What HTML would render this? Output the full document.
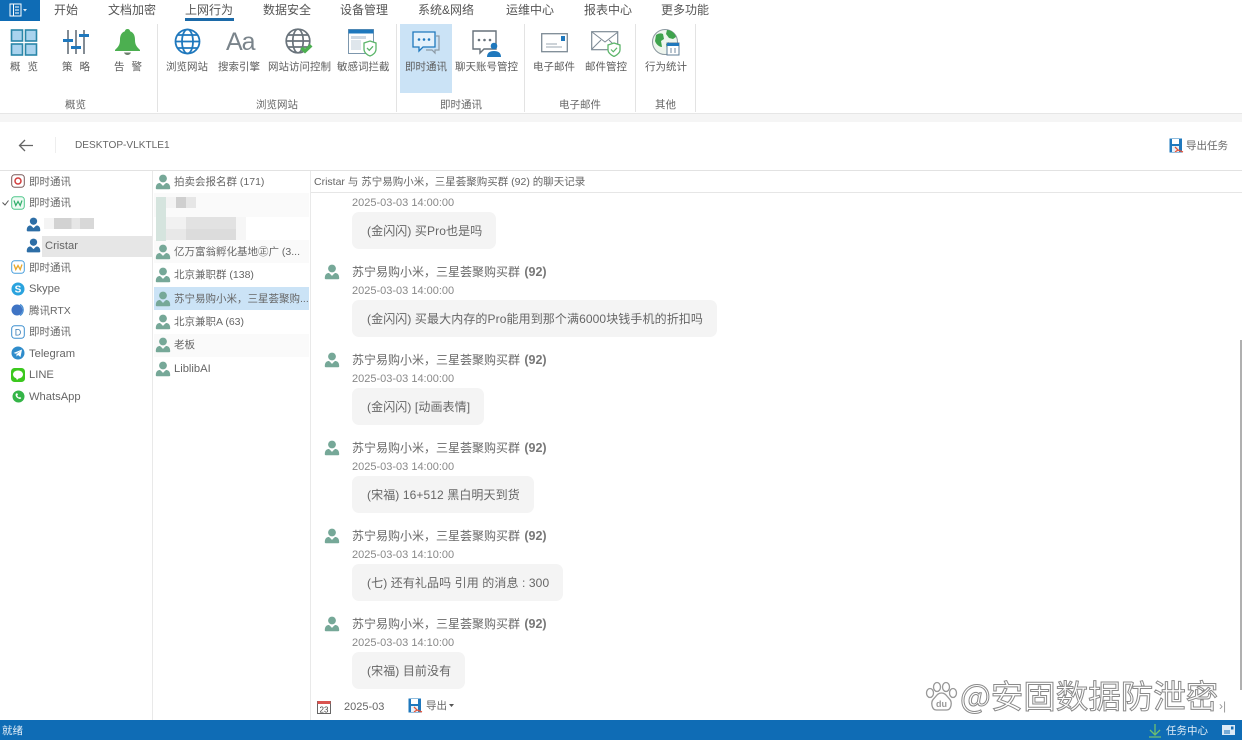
<!DOCTYPE html>
<html lang="zh"><head><meta charset="utf-8"><style>
html,body{margin:0;padding:0;background:#fff}
#p{position:relative;width:1242px;height:740px;overflow:hidden;background:#fff;font-family:"Liberation Sans","Noto Sans CJK SC",sans-serif;font-size:12px;color:#666}
#p div,#p span.a,#p svg.a{position:absolute}
.t{white-space:nowrap;line-height:16px}
.tab{top:2px;font-size:12px;color:#555}
.rl{top:59px;font-size:10.5px;color:#5c5c5c;text-align:center;white-space:nowrap;line-height:16px}
.wd{word-spacing:4px}
.gl{top:97px;font-size:10.5px;color:#666;text-align:center;white-space:nowrap;line-height:16px}
.sep{top:24px;width:1px;height:88px;background:#e3e3e3}
.tr{left:29px;font-size:10.5px;color:#666;white-space:nowrap;line-height:16px;margin-top:1px}
.li{left:174px;font-size:10.5px;color:#666;white-space:nowrap;line-height:16px;margin-top:1px}
.la{font-size:11.2px}
.ti{left:352px;font-size:12px;color:#6a6a6a;white-space:nowrap;line-height:16px;margin-top:1px}
.ti b{font-weight:bold;color:#777;font-size:12.5px;margin-left:1px}
.tm{left:352px;font-size:11px;color:#888;white-space:nowrap;line-height:14px;margin-top:1px}
.bu{left:352px;height:37px;background:#f4f4f4;border-radius:7px;font-size:12px;letter-spacing:.1px;color:#666;white-space:nowrap;line-height:39px;padding:0 14px 0 15px}
</style></head><body><div id="p">
<svg width="0" height="0" style="position:absolute"><defs>
<symbol id="u" viewBox="0 0 16 16"><circle cx="8" cy="4.500" r="3.900"/><path d="M.8 14.300c0-3 .9-4.500 3.100-5.200 1.200-.4 1.900.5 4.100 2.800 2.200-2.300 2.900-3.200 4.100-2.800 2.200.7 3.100 2.200 3.100 5.200 0 .6-.4 1-1 1H1.800c-.6 0-1-.4-1-1z"/></symbol>
</defs></svg>

<!-- top tabs -->
<div style="left:0;top:0;width:40px;height:21px;background:#0f6cb5"></div>
<svg class="a" style="left:9px;top:3px" width="20" height="14" viewBox="0 0 20 14"><rect x="1" y="1" width="11" height="12" fill="none" stroke="#fff"/><path d="M4.500 1v12M6 4h4M6 7h4M6 10h4" stroke="#fff" fill="none"/><path d="M14 6l2 2.500L18 6z" fill="#dbe9f5"/></svg>
<div class="t tab" style="left:54px">开始</div>
<div class="t tab" style="left:108px">文档加密</div>
<div class="t tab" style="left:185px">上网行为</div>
<div style="left:185px;top:18px;width:49px;height:3px;background:#1c6aa8"></div>
<div class="t tab" style="left:263px">数据安全</div>
<div class="t tab" style="left:340px">设备管理</div>
<div class="t tab" style="left:418px">系统&amp;网络</div>
<div class="t tab" style="left:506px">运维中心</div>
<div class="t tab" style="left:584px">报表中心</div>
<div class="t tab" style="left:661px">更多功能</div>

<!-- ribbon -->
<div style="left:400px;top:24px;width:52px;height:69px;background:#cbe3f6"></div>
<div class="sep" style="left:157px"></div><div class="sep" style="left:396px"></div><div class="sep" style="left:524px"></div><div class="sep" style="left:635px"></div><div class="sep" style="left:695px"></div>
<div style="left:0;top:113px;width:1242px;height:9px;background:#f5f5f5;border-top:1px solid #e6e6e6;box-sizing:border-box"></div>

<svg class="a" style="left:10px;top:28px" width="28" height="28" viewBox="0 0 28 28"><g fill="#a9d3ee" stroke="#2a86a8" stroke-width="1.600"><rect x="1.500" y="2" width="11" height="11"/><rect x="15.500" y="2" width="11" height="11"/><rect x="1.500" y="16" width="11" height="11"/><rect x="15.500" y="16" width="11" height="11"/></g></svg>
<svg class="a" style="left:62px;top:28px" width="28" height="28" viewBox="0 0 28 28"><path d="M6 2v24M14 2v24M22 2v24" stroke="#5c6770" stroke-width="1.500"/><path d="M1 11h10v3H1zM9 18h10v3H9zM17 6h10v3H17z" fill="#1f78bd"/></svg>
<svg class="a" style="left:114px;top:28px" width="27" height="27" viewBox="0 0 27 27"><path d="M13.500 1c1.500 0 2.500 1 2.600 2.300C20 4.800 21 8 21 12c0 5 2 7 5 10v1H1v-1c3-3 5-5 5-10 0-4 1-7.200 4.900-8.700C11 2 12 1 13.500 1z" fill="#4caf50"/><path d="M10 24.500h7c-.6 1.700-2 2.500-3.500 2.500S10.600 26.200 10 24.500z" fill="#6d7f6d"/></svg>
<svg class="a" style="left:174px;top:28px" width="27" height="27" viewBox="0 0 27 27" fill="none" stroke="#1f78bd" stroke-width="1.800"><circle cx="13.500" cy="13.500" r="12"/><ellipse cx="13.500" cy="13.500" rx="5.500" ry="12"/><path d="M1.500 13.500h24M3.500 7h20M3.500 20h20"/></svg>
<div class="t" style="left:226px;top:26px;font-size:25px;line-height:32px;color:#7a848b;letter-spacing:-1px">Aa</div>
<svg class="a" style="left:285px;top:28px" width="28" height="28" viewBox="0 0 28 28"><g fill="none" stroke="#69737b" stroke-width="1.700"><circle cx="13" cy="13" r="11.800"/><ellipse cx="13" cy="13" rx="5.200" ry="11.800"/><path d="M1.200 13h23.600M3 7h20M3 19h20"/></g><path d="M15 21l3-2.500 2 2 5-4.500 2.500 2.500L20 25.500z" fill="#4caf50"/></svg>
<svg class="a" style="left:348px;top:29px" width="29" height="28" viewBox="0 0 29 28"><rect x=".5" y=".5" width="25" height="24" fill="#fff" stroke="#7d97ad"/><rect x=".5" y=".5" width="25" height="4" fill="#1f78bd"/><rect x="3" y="7" width="15" height="3" fill="#cfd9e3"/><rect x="3" y="11" width="10" height="10" fill="#dfe6ec"/><path d="M22 12l6 2v6c0 3.500-3 6-6 7-3-1-6-3.500-6-7v-6z" fill="#fff" stroke="#5cb56a" stroke-width="1.300"/><path d="M19 19l2.300 2.300 3.700-4" fill="none" stroke="#5cb56a" stroke-width="1.300"/></svg>
<svg class="a" style="left:412px;top:31px" width="28" height="24" viewBox="0 0 28 24"><path d="M24 5h3v14h-4v3l-3-3h-6" fill="none" stroke="#8d9aa5" stroke-width="1.200"/><path d="M1 1h22v15H11l-4 4v-4H1z" fill="#e4f1fb" stroke="#1f78bd" stroke-width="1.300"/><circle cx="7" cy="8.500" r="1.300" fill="#1f78bd"/><circle cx="12" cy="8.500" r="1.300" fill="#1f78bd"/><circle cx="17" cy="8.500" r="1.300" fill="#1f78bd"/></svg>
<svg class="a" style="left:472px;top:30px" width="29" height="27" viewBox="0 0 29 27"><path d="M1 1h23v18H12l-4 4v-4H1z" fill="#fff" stroke="#67717a" stroke-width="1.400"/><circle cx="7" cy="10" r="1.300" fill="#67717a"/><circle cx="12.500" cy="10" r="1.300" fill="#67717a"/><circle cx="18" cy="10" r="1.300" fill="#67717a"/><circle cx="22" cy="16" r="3.300" fill="#1f78bd"/><path d="M15 27c0-4 2.500-6 7-6s7 2 7 6z" fill="#1f78bd"/></svg>
<svg class="a" style="left:541px;top:33px" width="27" height="20" viewBox="0 0 27 20"><rect x=".7" y=".7" width="25.600" height="18" fill="#fff" stroke="#7d8a95" stroke-width="1.300"/><rect x="20" y="3" width="4" height="5" fill="#1f78bd"/><path d="M5 11h11M5 14h16" stroke="#9ba7b1"/></svg>
<svg class="a" style="left:591px;top:31px" width="30" height="26" viewBox="0 0 30 26"><rect x=".7" y=".7" width="26" height="18" fill="#fff" stroke="#7d8a95" stroke-width="1.200"/><path d="M1 1l13 10L27 1M1 18l9-9M27 18l-9-9" fill="none" stroke="#7d8a95"/><path d="M23 12l6 2v5c0 3-3 5-6 6.500-3-1.500-6-3.500-6-6.500v-5z" fill="#fff" stroke="#5cb56a" stroke-width="1.300"/><path d="M20 18.500l2.300 2.300 3.700-4" fill="none" stroke="#5cb56a" stroke-width="1.200"/></svg>
<svg class="a" style="left:651px;top:28px" width="30" height="29" viewBox="0 0 30 29"><circle cx="14" cy="14" r="12.500" fill="#eef5ee" stroke="#8a979f"/><path d="M5 7c3-2 5-2 7-1l1 5-3 2 1 6c-3 0-6-3-7-6zM16 2c4 0 8 3 9 7l-3 2-4-1-3-4zM15 16l3-2v8l-2 1z" fill="#3fa34d"/><rect x="16" y="15" width="12" height="12" fill="#fff" stroke="#5f7d96"/><rect x="16" y="15" width="12" height="3" fill="#1f78bd"/><path d="M19 20h2v5h-2zM23 20h2v5h-2z" fill="#b8c4cf"/></svg>

<div class="rl wd" style="left:0;width:48px">概 览</div>
<div class="rl wd" style="left:52px;width:48px">策 略</div>
<div class="rl wd" style="left:104px;width:48px">告 警</div>
<div class="rl" style="left:166px">浏览网站</div>
<div class="rl" style="left:218px">搜索引擎</div>
<div class="rl" style="left:268px">网站访问控制</div>
<div class="rl" style="left:337px">敏感词拦截</div>
<div class="rl" style="left:405px">即时通讯</div>
<div class="rl" style="left:455px">聊天账号管控</div>
<div class="rl" style="left:533px">电子邮件</div>
<div class="rl" style="left:585px">邮件管控</div>
<div class="rl" style="left:645px">行为统计</div>
<div class="gl" style="left:65px">概览</div>
<div class="gl" style="left:256px">浏览网站</div>
<div class="gl" style="left:440px">即时通讯</div>
<div class="gl" style="left:559px">电子邮件</div>
<div class="gl" style="left:655px">其他</div>

<!-- header -->
<svg class="a" style="left:18px;top:139px" width="15" height="13" viewBox="0 0 15 13"><path d="M7 1L1.500 6.500 7 12M1.500 6.500H15" fill="none" stroke="#666" stroke-width="1.300"/></svg>
<div style="left:55px;top:137px;width:1px;height:16px;background:#eee"></div>
<div class="t" style="left:75px;top:138px;font-size:10.100px;color:#666">DESKTOP-VLKTLE1</div>
<svg class="a" style="left:1169px;top:138px" width="15" height="15" viewBox="0 0 15 15"><path d="M.5 .5h12.500v14H.5z" fill="#1f78bd"/><rect x="3" y="1" width="7" height="5" fill="#fff"/><rect x="3" y="8" width="7" height="6" fill="#e8f1f8"/><path d="M6 9l3 3 5 2M9 12l-3 2" stroke="#e0533a" stroke-width="1.300" fill="none"/></svg>
<div class="t" style="left:1186px;top:138px;font-size:10.500px;color:#666">导出任务</div>
<div style="left:0;top:170px;width:1242px;height:1px;background:#e2e2e2"></div>

<!-- panel lines -->
<div style="left:152px;top:171px;width:1px;height:549px;background:#e9e9e9"></div>
<div style="left:310px;top:171px;width:1px;height:549px;background:#e9e9e9"></div>

<!-- tree -->
<div style="left:42px;top:236px;width:110px;height:21px;background:#e6e6e6"></div>
<svg class="a" style="left:11px;top:174px" width="14" height="14" viewBox="0 0 14 14"><rect x=".7" y=".7" width="12.600" height="12.600" rx="3" fill="#fff" stroke="#7a5a5a"/><circle cx="7" cy="7" r="3" fill="none" stroke="#d23c3c" stroke-width="1.500"/></svg>
<svg class="a" style="left:2px;top:200px" width="7" height="6" viewBox="0 0 7 6"><path d="M.5 2.500L3 5l3.500-4.500" fill="none" stroke="#555"/></svg>
<svg class="a" style="left:11px;top:196px" width="14" height="14" viewBox="0 0 14 14"><rect x=".7" y=".7" width="12.600" height="12.600" rx="3" fill="#eefaf3" stroke="#4fc78b"/><path d="M3 4.500l1.800 5 2.200-4 2.200 4 1.800-5" fill="none" stroke="#2fae6a" stroke-width="1.200"/></svg>
<svg class="a" style="left:26px;top:217px" width="15" height="15" fill="#2d6ea6"><use href="#u"/></svg>
<svg class="a" style="left:26px;top:238px" width="15" height="15" fill="#2d6ea6"><use href="#u"/></svg>
<svg class="a" style="left:11px;top:260px" width="14" height="14" viewBox="0 0 14 14"><rect x=".7" y=".7" width="12.600" height="12.600" rx="3" fill="#fff" stroke="#4a9fdc"/><path d="M3 4.500l1.800 5 2.200-4 2.200 4 1.800-5" fill="none" stroke="#e8a92e" stroke-width="1.300"/></svg>
<svg class="a" style="left:11px;top:282px" width="14" height="14" viewBox="0 0 14 14"><circle cx="7" cy="7" r="6.500" fill="#2aa3de"/><text x="7" y="10.500" font-size="10" font-weight="bold" fill="#fff" text-anchor="middle" font-family="Liberation Sans">S</text></svg>
<svg class="a" style="left:11px;top:303px" width="14" height="14" viewBox="0 0 14 14"><circle cx="6" cy="7" r="5.500" fill="#3f74c4"/><path d="M9 1.500c4 2 4.500 8 0 11" fill="none" stroke="#4a90d4" stroke-width="1.300"/></svg>
<svg class="a" style="left:11px;top:325px" width="14" height="14" viewBox="0 0 14 14"><rect x=".7" y=".7" width="12.600" height="12.600" rx="3" fill="#fff" stroke="#3d8fcf"/><text x="7" y="10.500" font-size="9" fill="#3d7fb5" text-anchor="middle" font-family="Liberation Sans">D</text></svg>
<svg class="a" style="left:11px;top:346px" width="14" height="14" viewBox="0 0 14 14"><circle cx="7" cy="7" r="6.500" fill="#2f8ccb"/><path d="M2.500 7L11 3.500 9.500 11 7 9l-1.500 1.500V8.300L9.500 5 5 7.800z" fill="#fff"/></svg>
<svg class="a" style="left:11px;top:368px" width="14" height="14" viewBox="0 0 14 14"><rect width="14" height="14" rx="3.500" fill="#3bc81e"/><ellipse cx="7" cy="6.500" rx="5" ry="4" fill="#fff"/><path d="M5 10h3l-2 2z" fill="#fff"/></svg>
<svg class="a" style="left:12px;top:390px" width="13" height="13" viewBox="0 0 13 13"><circle cx="6.500" cy="6.500" r="6" fill="#35b548"/><path d="M4 3.500c-1 1.500 0 3.500 1.500 4.500s3 1.500 3.800 0L8 7l-1 .5C6 7 5.500 6.300 5.200 5.500L6 4.700 5.200 3.300z" fill="#fff"/></svg>

<div class="t tr" style="top:173px">即时通讯</div>
<div class="t tr" style="top:194px">即时通讯</div>
<div style="left:44px;top:218px;width:50px;height:11px;background:linear-gradient(90deg,#f4f4f4 0,#f4f4f4 20%,#d2d2d2 20%,#d2d2d2 55%,#e6e6e6 55%,#e6e6e6 72%,#d8d8d8 72%)"></div>
<div class="t tr la" style="top:237px;left:45px">Cristar</div>
<div class="t tr" style="top:259px">即时通讯</div>
<div class="t tr la" style="top:280px">Skype</div>
<div class="t tr" style="top:302px">腾讯RTX</div>
<div class="t tr" style="top:323px">即时通讯</div>
<div class="t tr la" style="top:345px">Telegram</div>
<div class="t tr la" style="top:366px">LINE</div>
<div class="t tr la" style="top:388px">WhatsApp</div>

<!-- list -->
<div style="left:154px;top:193px;width:155px;height:24px;background:#fafafa"></div>
<div style="left:154px;top:240px;width:155px;height:23px;background:#fafafa"></div>
<div style="left:154px;top:287px;width:155px;height:23px;background:#cbe3f6"></div>
<div style="left:154px;top:334px;width:155px;height:23px;background:#fafafa"></div>
<!-- pixelated block -->
<div style="left:156px;top:197px;width:10px;height:44px;background:#d5e4de"></div>
<div style="left:166px;top:197px;width:10px;height:11px;background:#f3f3f3"></div>
<div style="left:176px;top:197px;width:10px;height:11px;background:#cfcfcf"></div>
<div style="left:186px;top:197px;width:10px;height:11px;background:#e6e6e6"></div>
<div style="left:166px;top:217px;width:20px;height:12px;background:#f1f1f1"></div>
<div style="left:186px;top:217px;width:50px;height:12px;background:#e2e2e2"></div>
<div style="left:166px;top:229px;width:20px;height:11px;background:#e8e8e8"></div>
<div style="left:186px;top:229px;width:50px;height:11px;background:#dcdcdc"></div>
<div style="left:236px;top:217px;width:10px;height:23px;background:#f6f6f6"></div>
<svg class="a" style="left:155px;top:174px" width="16" height="16" fill="#76a898"><use href="#u"/></svg>
<svg class="a" style="left:155px;top:244px" width="16" height="16" fill="#76a898"><use href="#u"/></svg>
<svg class="a" style="left:155px;top:267px" width="16" height="16" fill="#76a898"><use href="#u"/></svg>
<svg class="a" style="left:155px;top:291px" width="16" height="16" fill="#76a898"><use href="#u"/></svg>
<svg class="a" style="left:155px;top:314px" width="16" height="16" fill="#76a898"><use href="#u"/></svg>
<svg class="a" style="left:155px;top:337px" width="16" height="16" fill="#76a898"><use href="#u"/></svg>
<svg class="a" style="left:155px;top:361px" width="16" height="16" fill="#76a898"><use href="#u"/></svg>
<div class="t li" style="top:173px">拍卖会报名群 (171)</div>
<div class="t li" style="top:243px">亿万富翁孵化基地㊣广 (3...</div>
<div class="t li" style="top:266px">北京兼职群 (138)</div>
<div class="t li" style="top:290px">苏宁易购小米，三星荟聚购...</div>
<div class="t li" style="top:313px">北京兼职A (63)</div>
<div class="t li" style="top:336px">老板</div>
<div class="t li la" style="top:360px">LiblibAI</div>

<!-- chat header -->
<div class="t" style="left:314px;top:174px;font-size:10.500px;color:#666">Cristar 与 苏宁易购小米，三星荟聚购买群 (92) 的聊天记录</div>
<div style="left:311px;top:192px;width:931px;height:1px;background:#e6e6e6"></div>

<!-- messages -->
<div class="t tm" style="top:195px">2025-03-03 14:00:00</div>
<div class="bu" style="top:212px">(金闪闪) 买Pro也是吗</div>

<svg class="a" style="left:324px;top:264px" width="16" height="16" fill="#76a898"><use href="#u"/></svg>
<div class="t ti" style="top:263px">苏宁易购小米，三星荟聚购买群 <b>(92)</b></div>
<div class="t tm" style="top:283px">2025-03-03 14:00:00</div>
<div class="bu" style="top:300px">(金闪闪) 买最大内存的Pro能用到那个满6000块钱手机的折扣吗</div>

<svg class="a" style="left:324px;top:352px" width="16" height="16" fill="#76a898"><use href="#u"/></svg>
<div class="t ti" style="top:351px">苏宁易购小米，三星荟聚购买群 <b>(92)</b></div>
<div class="t tm" style="top:371px">2025-03-03 14:00:00</div>
<div class="bu" style="top:388px">(金闪闪) [动画表情]</div>

<svg class="a" style="left:324px;top:440px" width="16" height="16" fill="#76a898"><use href="#u"/></svg>
<div class="t ti" style="top:439px">苏宁易购小米，三星荟聚购买群 <b>(92)</b></div>
<div class="t tm" style="top:459px">2025-03-03 14:00:00</div>
<div class="bu" style="top:476px">(宋福) 16+512 黑白明天到货</div>

<svg class="a" style="left:324px;top:528px" width="16" height="16" fill="#76a898"><use href="#u"/></svg>
<div class="t ti" style="top:527px">苏宁易购小米，三星荟聚购买群 <b>(92)</b></div>
<div class="t tm" style="top:547px">2025-03-03 14:10:00</div>
<div class="bu" style="top:564px">(七) 还有礼品吗 引用 的消息 : 300</div>

<svg class="a" style="left:324px;top:616px" width="16" height="16" fill="#76a898"><use href="#u"/></svg>
<div class="t ti" style="top:615px">苏宁易购小米，三星荟聚购买群 <b>(92)</b></div>
<div class="t tm" style="top:635px">2025-03-03 14:10:00</div>
<div class="bu" style="top:652px">(宋福) 目前没有</div>

<!-- scrollbar -->
<div style="left:1240px;top:340px;width:2px;height:350px;background:#b0b0b0"></div>

<!-- bottom bar -->
<svg class="a" style="left:317px;top:700px" width="14" height="14" viewBox="0 0 14 14"><rect x=".5" y="1.500" width="13" height="12" fill="#fff" stroke="#666"/><rect x=".5" y="1" width="13" height="3" fill="#d9534f"/><text x="7" y="12.500" font-size="8" fill="#444" text-anchor="middle" font-family="Liberation Sans">23</text></svg>
<div class="t" style="left:344px;top:699px;font-size:11px;color:#666">2025-03</div>
<svg class="a" style="left:408px;top:698px" width="15" height="15" viewBox="0 0 15 15"><path d="M.5 .5h12.500v14H.5z" fill="#1f78bd"/><rect x="3" y="1" width="7" height="5" fill="#fff"/><rect x="3" y="8" width="7" height="6" fill="#e8f1f8"/><path d="M6 9l3 3 5 2M9 12l-3 2" stroke="#e0533a" stroke-width="1.300" fill="none"/></svg>
<div class="t" style="left:426px;top:698px;font-size:10.500px;color:#666">导出</div>
<svg class="a" style="left:449px;top:704px" width="5" height="4" viewBox="0 0 5 4"><path d="M0 0h5L2.500 3z" fill="#555"/></svg>

<!-- watermark -->
<svg class="a" style="left:925px;top:680px" width="34" height="34" viewBox="0 0 34 34" fill="#fff" stroke="#999" stroke-width="1.300"><ellipse cx="5" cy="13" rx="3.500" ry="4.500"/><ellipse cx="12" cy="7" rx="3.500" ry="4.500"/><ellipse cx="21" cy="7" rx="3.500" ry="4.500"/><ellipse cx="28" cy="13" rx="3.500" ry="4.500"/><path d="M16.500 13c4 0 5 3 8 6 3 3 2 11-3 11h-10c-5 0-6-8-3-11 3-3 4-6 8-6z"/><text x="16.500" y="27" font-size="9" font-weight="bold" text-anchor="middle" stroke="none" fill="#999" font-family="Liberation Sans">du</text></svg>
<div class="t" style="left:960px;top:673px;font-size:32.500px;line-height:44px;color:#fff;-webkit-text-stroke:1px #8a8a8a;font-family:'Noto Sans CJK SC','Liberation Sans',sans-serif">@安固数据防泄密</div>
<div class="t" style="left:1219px;top:698px;font-size:12px;color:#999">›|</div>

<!-- status -->
<div style="left:0;top:720px;width:1242px;height:20px;background:#0f6cb5"></div>
<div class="t" style="left:2px;top:723px;font-size:10.500px;color:#e4eff8">就绪</div>
<svg class="a" style="left:1148px;top:724px" width="14" height="14" viewBox="0 0 14 14"><path d="M7 0v10M2 6l5 5 5-5M1 13h12" fill="none" stroke="#6fc06f" stroke-width="1.300"/></svg>
<div class="t" style="left:1166px;top:723px;font-size:10.500px;color:#e4eff8">任务中心</div>
<svg class="a" style="left:1222px;top:725px" width="13" height="10" viewBox="0 0 13 10"><rect width="13" height="10" fill="#dbe9f5"/><path d="M2 6h6M2 8h6" stroke="#0f6cb5"/><rect x="9" y="1.500" width="2.500" height="3" fill="#0f6cb5"/></svg>
</div></body></html>
